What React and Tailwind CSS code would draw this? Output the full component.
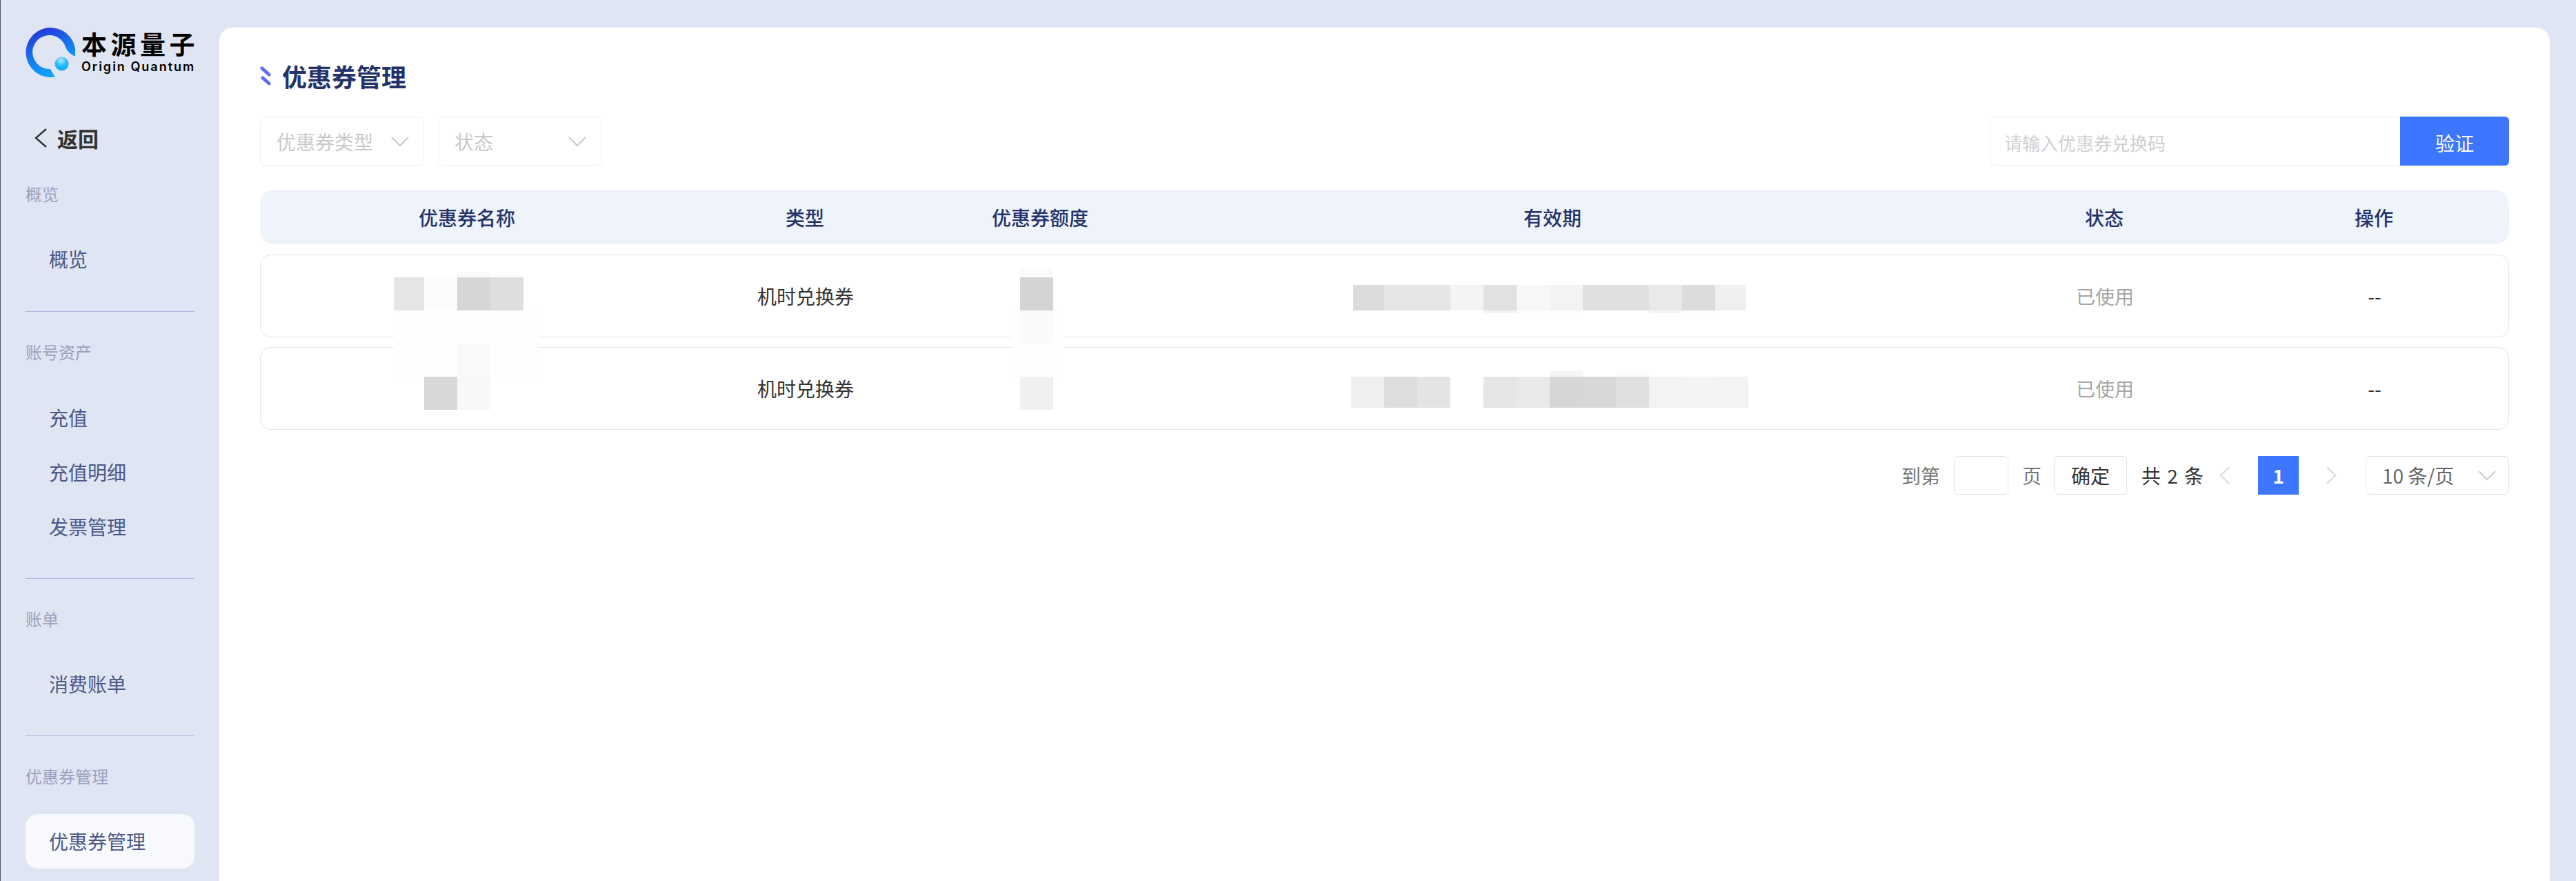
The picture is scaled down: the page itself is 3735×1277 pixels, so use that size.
const FONT = 'font-["Noto_Sans_CJK_SC","Noto_Sans",sans-serif]';

const NAV = [
  { title: '概览', items: ['概览'], list: 'mt-[39px] mb-[36px]' },
  { title: '账号资产', items: ['充值', '充值明细', '发票管理'], list: 'mt-[40px] mb-[35px]' },
  { title: '账单', items: ['消费账单'], list: 'mt-[39px] mb-[35px]' },
  { title: '优惠券管理', items: ['优惠券管理'], list: 'mt-[39px]', active: '优惠券管理' },
];

const COLS = 'grid grid-cols-[600px_380px_302px_1184px_416px_366px] items-center text-center';
const HEADERS = ['优惠券名称', '类型', '优惠券额度', '有效期', '状态', '操作'];

// 打码色块：页面坐标 [x, y, w, h, 颜色]
const TABLE_X = 377;
const TABLE_Y = 275;
const MOSAIC = [
  // 名称
  [571, 450, 210, 96, '#fefefe'],
  [571, 402, 44, 48, '#e6e6e6'],
  [615, 402, 48, 48, '#fbfbfb'],
  [663, 402, 48, 48, '#d6d6d6'],
  [711, 402, 48, 48, '#dfdedc'],
  [663, 394, 48, 8, '#fafafa'],
  [711, 394, 48, 8, '#fdfdfd'],
  [663, 498, 48, 48, '#fafafa'],
  [615, 546, 48, 48, '#d8d8d6'],
  [663, 546, 48, 48, '#f8f8f8'],
  // 额度
  [1467, 450, 76, 96, '#fefefe'],
  [1479, 450, 48, 48, '#fafafa'],
  [1479, 389, 48, 13, '#fafbfd'],
  [1479, 402, 48, 48, '#d4d4d4'],
  [1479, 546, 48, 48, '#f0f0f0'],
  // 有效期 第一行
  [1962, 413, 45, 37, '#dcdcdc'],
  [2007, 413, 48, 37, '#e6e6e6'],
  [2055, 413, 48, 37, '#e6e6e6'],
  [2103, 413, 48, 37, '#f4f4f4'],
  [2151, 413, 48, 37, '#e1e1e1'],
  [2199, 413, 48, 37, '#f6f7f7'],
  [2247, 413, 48, 37, '#f3f3f3'],
  [2295, 413, 48, 37, '#dfdfdf'],
  [2343, 413, 48, 37, '#e0e0df'],
  [2391, 413, 48, 37, '#e9e9e9'],
  [2439, 413, 48, 37, '#dbdcdb'],
  [2487, 413, 44, 37, '#efefef'],
  [2151, 450, 48, 4, '#f5f5f5'],
  [2199, 450, 48, 4, '#fdfdfd'],
  [2247, 450, 48, 4, '#fcfcfc'],
  [2391, 450, 48, 4, '#f5f5f5'],
  [2439, 450, 48, 4, '#fdfdfd'],
  // 有效期 第二行
  [1959, 546, 48, 45, '#efefef'],
  [2007, 546, 48, 45, '#dcdedd'],
  [2055, 546, 48, 45, '#e4e4e4'],
  [2151, 546, 48, 45, '#e5e5e5'],
  [2199, 546, 48, 45, '#e9e9e9'],
  [2247, 546, 48, 45, '#d6d6d6'],
  [2295, 546, 48, 45, '#d8d8d8'],
  [2343, 546, 48, 45, '#dfdfdd'],
  [2391, 546, 48, 45, '#f3f3f3'],
  [2439, 546, 48, 45, '#f4f4f4'],
  [2487, 546, 48, 45, '#f3f3f3'],
  [2247, 538, 48, 8, '#f5f5f5'],
  [2343, 538, 48, 8, '#fafafa'],
];

function Logo() {
  return (
    <div className="flex h-[72px]">
      <svg width="72" height="72" viewBox="0 0 72 72" className="shrink-0">
        <defs>
          <linearGradient id="ring" x1="0.3" y1="0" x2="0.7" y2="1">
            <stop offset="0" stopColor="#2438d8" />
            <stop offset="0.55" stopColor="#1580f0" />
            <stop offset="1" stopColor="#0cb0ff" />
          </linearGradient>
          <radialGradient id="ball" cx="0.45" cy="0.25" r="0.8">
            <stop offset="0" stopColor="#b4e8ff" />
            <stop offset="0.5" stopColor="#25bdff" />
            <stop offset="1" stopColor="#0aa4ff" />
          </radialGradient>
        </defs>
        <path
          d="M72 42 A36 36 0 1 0 43 71.5 Q39 66 36 60 A24.5 24.5 0 1 1 58 28 Q61 37 72 42 Z"
          fill="url(#ring)"
        />
        <circle cx="52.5" cy="52.5" r="10" fill="url(#ball)" />
      </svg>
      <div className="ml-[9px] flex flex-col text-black">
        <span className="h-[46px] text-[37px] leading-[46px] font-bold tracking-[5.5px] whitespace-nowrap">本源量子</span>
        <span className='h-[22px] font-["Inter",sans-serif] text-[18px] leading-[22px] font-semibold tracking-[2px] whitespace-nowrap'>Origin Quantum</span>
      </div>
    </div>
  );
}

function Sidebar() {
  return (
    <aside className="w-[317px] shrink-0 px-[36px] pt-10">
      <Logo />
      <div className="mt-[68px] mb-[45px] flex h-10 items-center pl-3 text-[30px] font-bold text-[#333]">
        <svg width="20" height="28" viewBox="0 0 20 28" fill="none" stroke="#333" strokeWidth="2.4">
          <polyline points="18,1 3,14 18,27" />
        </svg>
        <span className="ml-[14px]">返回</span>
      </div>
      {NAV.map((group, i) => (
        <div key={group.title} className={i > 0 ? 'border-t border-[#b0b8e0] pt-[42px]' : ''}>
          <div className="h-8 text-[24px] leading-8 text-[#9aa1bd]">{group.title}</div>
          <div className={group.list}>
            {group.items.map((item) => (
              <div
                key={item}
                className={`h-[79px] rounded-[18px] pl-[34px] text-[28px] leading-[79px] text-[#4b5887] ${group.active === item ? 'bg-[#f7f9fc]' : ''}`}
              >
                {item}
              </div>
            ))}
          </div>
        </div>
      ))}
    </aside>
  );
}

function Chevron({ className }) {
  return (
    <svg width="26" height="14" viewBox="0 0 26 14" fill="none" stroke="currentColor" strokeWidth="2.4" className={className}>
      <polyline points="1,1 13,13 25,1" />
    </svg>
  );
}

function FilterSelect({ label, width }) {
  return (
    <div className={`flex h-[71px] items-center justify-between rounded-[6px] border border-[#eff0f5] pr-[21px] pl-[23px] text-[28px] text-[#c9c9c9] ${width}`}>
      <span>{label}</span>
      <Chevron className="text-[#cdcdcd]" />
    </div>
  );
}

function CouponRow() {
  return (
    <div className={`${COLS} h-[120px] rounded-[16px] border border-[#e3e3ec] text-[28px] text-[#333]`}>
      <div />
      <div>机时兑换券</div>
      <div />
      <div />
      <div className="text-[#a6a6a6]">已使用</div>
      <div>--</div>
    </div>
  );
}

function Table() {
  return (
    <div className="relative mt-[35px]">
      <div className={`${COLS} h-[79px] rounded-[20px] bg-[#eff3fb] text-[28px] font-medium text-[#233269]`}>
        {HEADERS.map((h) => (
          <div key={h}>{h}</div>
        ))}
      </div>
      <div className="mt-[15px] flex flex-col gap-[14px]">
        <CouponRow />
        <CouponRow />
      </div>
      {MOSAIC.map(([x, y, w, h, color], i) => (
        <span
          key={i}
          className="absolute"
          style={{ left: x - TABLE_X, top: y - TABLE_Y, width: w, height: h, backgroundColor: color }}
        />
      ))}
    </div>
  );
}

function Pagination() {
  return (
    <div className="mt-[38px] flex h-14 items-center justify-end text-[28px]">
      <span className="text-[#777]">到第</span>
      <div className="ml-[20px] h-14 w-[79px] rounded-[6px] border border-[#e2e2e6]" />
      <span className="ml-[20px] text-[#777]">页</span>
      <div className="ml-[18px] flex h-14 w-[106px] items-center justify-center rounded-[6px] border border-[#e2e2e6] text-[#333]">确定</div>
      <div className="ml-[21px] flex w-[90px] justify-between text-[#333]">
        <span>共</span>
        <span>2</span>
        <span>条</span>
      </div>
      <svg width="15" height="26" viewBox="0 0 15 26" fill="none" stroke="#dcdcdc" strokeWidth="2.4" className="ml-[23px]">
        <polyline points="14,1 2,13 14,25" />
      </svg>
      <div className="ml-[41px] flex h-14 w-[59px] items-center justify-center bg-[#3e77ff] font-bold text-white">1</div>
      <svg width="15" height="26" viewBox="0 0 15 26" fill="none" stroke="#dcdcdc" strokeWidth="2.4" className="ml-[40px]">
        <polyline points="1,1 13,13 1,25" />
      </svg>
      <div className="ml-[42px] flex h-14 w-[208px] items-center justify-between rounded-[6px] border border-[#e2e2e6] pr-[18px] pl-[23px] text-[#666]">
        <span>10 条/页</span>
        <Chevron className="text-[#cfcfcf]" />
      </div>
    </div>
  );
}

export default function App() {
  return (
    <div className={`flex h-screen overflow-hidden border-l border-[#55555f] bg-[#dfe5f3] ${FONT}`}>
      <Sidebar />
      <main className="mt-10 mr-[38px] min-w-0 flex-1 rounded-t-[20px] bg-white px-[59px] pt-[45px]">
        <div className="flex h-[50px] items-center">
          <svg width="16" height="28" viewBox="0 0 16 28" fill="none" stroke="#5b6ff0" strokeWidth="5" strokeLinecap="round">
            <line x1="3" y1="3" x2="13" y2="12" />
            <line x1="4" y1="17" x2="13" y2="25" />
          </svg>
          <h1 className="ml-4 text-[36px] font-bold text-[#233269]">优惠券管理</h1>
        </div>
        <div className="mt-[34px] flex h-[71px]">
          <div className="flex gap-5">
            <FilterSelect label="优惠券类型" width="w-[238px]" />
            <FilterSelect label="状态" width="w-[237px]" />
          </div>
          <div className="ml-auto flex">
            <div className="flex w-[594px] items-center rounded-l-[6px] border border-r-0 border-[#eff0f5] pt-1 pl-[19px] text-[26px] text-[#cfcfcf]">
              请输入优惠券兑换码
            </div>
            <button className="w-[158px] rounded-r-[6px] bg-[#3e77ff] pt-1 text-[28px] text-white">验证</button>
          </div>
        </div>
        <Table />
        <Pagination />
      </main>
    </div>
  );
}
